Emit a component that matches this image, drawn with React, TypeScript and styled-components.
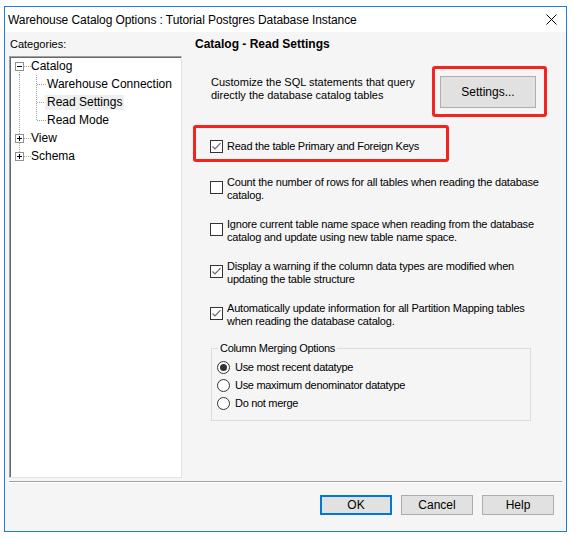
import React from 'react'
import styled, { createGlobalStyle } from 'styled-components'

const GlobalStyle = createGlobalStyle`
  html, body {
    margin: 0;
    padding: 0;
    background: #ffffff;
  }
  body {
    font-family: "Liberation Sans", Arial, sans-serif;
    color: #000;
  }
`

const Window = styled.div`
  box-sizing: border-box;
  width: 563px;
  height: 526px;
  margin: 6px 0 0 4px;
  border: 1px solid #1c7ed6;
  display: flex;
  flex-direction: column;
  background: #f5f5f5;
`

const TitleBar = styled.div`
  height: 25px;
  flex: none;
  display: flex;
  align-items: center;
  justify-content: space-between;
  padding: 0 9px 0 3px;
  background: #ffffff;
  font-size: 12px;
  letter-spacing: -0.08px;
`

const Body = styled.div`
  flex: 1;
  display: flex;
  flex-direction: column;
  min-height: 0;
`

const Main = styled.div`
  flex: 1;
  display: flex;
  padding: 0 4px;
  min-height: 0;
`

const LeftCol = styled.div`
  width: 173px;
  display: flex;
  flex-direction: column;
`

const CategoriesLabel = styled.div`
  height: 24px;
  box-sizing: border-box;
  padding: 6px 0 0 1px;
  font-size: 11px;
  line-height: 13px;
`

const TreeBox = styled.div`
  flex: 1;
  background: #fff;
  border-style: solid;
  border-width: 1px;
  border-color: #a0a0a0 #e3e3e3 #e3e3e3 #a0a0a0;
  box-shadow: inset 1px 1px 0 #696969;
`

const TreeRow = styled.div`
  height: 18px;
  display: flex;
  align-items: center;
  font-size: 12px;
  white-space: nowrap;
`

const TreeLabel = styled.span<{ $selected?: boolean }>`
  line-height: 15px;
  padding: 0 2px;
  margin-left: -2px;
  background: ${(p) => (p.$selected ? '#efefef' : 'transparent')};
`

const RightCol = styled.div`
  flex: 1;
  padding-left: 11px;
  display: flex;
  flex-direction: column;
`

const Heading = styled.div`
  margin-top: 5px;
  padding-left: 2px;
  font-size: 12px;
  line-height: 14px;
  font-weight: bold;
`

const SettingsRow = styled.div`
  margin-top: 15px;
  display: flex;
  align-items: flex-start;
`

const Description = styled.div`
  width: 221px;
  margin-left: 18px;
  padding-top: 10px;
  font-size: 11px;
  line-height: 13px;
`

const Highlight = styled.div<{ $pad: string; $width?: number; $top?: number }>`
  box-sizing: border-box;
  border: 3px solid #f5231d;
  border-radius: 3px;
  padding: ${(p) => p.$pad};
  width: ${(p) => (p.$width ? `${p.$width}px` : 'auto')};
  margin-top: ${(p) => p.$top ?? 0}px;
`

const Button = styled.button<{ $w: number; $h: number; $default?: boolean }>`
  box-sizing: border-box;
  width: ${(p) => p.$w}px;
  height: ${(p) => p.$h}px;
  margin: 0;
  padding: 0;
  background: #e1e1e1;
  border: ${(p) => (p.$default ? '2px solid #0078d7' : '1px solid #adadad')};
  font-family: "Liberation Sans", Arial, sans-serif;
  font-size: 12px;
  color: #000;
`

const OptionList = styled.div`
  margin: 14px 0 0 17px;
  display: flex;
  flex-direction: column;
  gap: 16px;
`

const Option = styled.div`
  display: flex;
  align-items: center;
  gap: 4px;
`

const BoxSlot = styled.span`
  display: flex;
  flex: none;
  margin-top: -4px;
`

const OptionText = styled.div`
  font-size: 11px;
  line-height: 13px;
  letter-spacing: -0.2px;
  white-space: nowrap;
`

const InlineCheck = styled.div`
  display: flex;
  align-items: center;
  gap: 4px;
  font-size: 11px;
  line-height: 13px;
  letter-spacing: -0.25px;
`

const GroupBox = styled.div`
  margin: 20px 0 0 18px;
  width: 320px;
  height: 73px;
  box-sizing: border-box;
  border: 1px solid #dcdcdc;
  padding: 0 0 0 5px;
  display: flex;
  flex-direction: column;
  align-items: flex-start;
`

const Legend = styled.div`
  margin: -7px 0 0 1px;
  padding: 0 2px;
  background: #f5f5f5;
  font-size: 11px;
  line-height: 13px;
  letter-spacing: -0.3px;
  white-space: nowrap;
`

const RadioList = styled.div`
  display: flex;
  flex-direction: column;
  margin-top: 3px;
`

const RadioRow = styled.div`
  height: 18px;
  display: flex;
  align-items: center;
  gap: 5px;
  font-size: 11px;
  letter-spacing: -0.3px;
`

const Separator = styled.div`
  margin: 3px 4px 0 4px;
  border-top: 1px solid #a0a0a0;
  border-bottom: 1px solid #ffffff;
`

const Footer = styled.div`
  display: flex;
  justify-content: flex-end;
  gap: 9px;
  padding: 12px 12px 0 0;
  height: 36px;
`

const CloseIcon = () => (
  <svg width="11" height="11" viewBox="0 0 11 11">
    <path d="M0.5 0.5 L10.5 10.5 M10.5 0.5 L0.5 10.5" stroke="#000" strokeWidth="1" />
  </svg>
)

const Checkbox = ({ checked }: { checked?: boolean }) => (
  <svg width="13" height="13" viewBox="0 0 13 13">
    <rect x="0.5" y="0.5" width="12" height="12" fill="#fff" stroke="#333" />
    {checked && (
      <path d="M2.5 6.5 L5 9 L10.5 3.2" fill="none" stroke="#6a6a6a" strokeWidth="1.2" />
    )}
  </svg>
)

const Radio = ({ checked }: { checked?: boolean }) => (
  <svg width="13" height="13" viewBox="0 0 13 13">
    <circle cx="6.5" cy="6.5" r="6" fill="#fff" stroke="#333" />
    {checked && <circle cx="6.5" cy="6.5" r="3.5" fill="#333" />}
  </svg>
)

type GutterProps = {
  depth: 0 | 1
  expander?: 'plus' | 'minus'
  first?: boolean
  last?: boolean
}

const dots = { stroke: '#a0a0a0', strokeDasharray: '1 1', shapeRendering: 'crispEdges' as const }

const TreeGutter = ({ depth, expander, first, last }: GutterProps) => {
  if (depth === 0) {
    return (
      <svg width="21" height="18" viewBox="0 0 21 18">
        <line x1="9.5" y1={first ? 9 : 0} x2="9.5" y2={last ? 9 : 18} {...dots} />
        <line x1="14" y1="9.5" x2="21" y2="9.5" {...dots} />
        {expander && (
          <g shapeRendering="crispEdges">
            <rect x="5.5" y="5.5" width="8" height="8" fill="#fff" stroke="#919191" />
            <line x1="7" y1="9.5" x2="12" y2="9.5" stroke="#000" />
            {expander === 'plus' && <line x1="9.5" y1="7" x2="9.5" y2="12" stroke="#000" />}
          </g>
        )}
      </svg>
    )
  }
  return (
    <svg width="37" height="18" viewBox="0 0 37 18">
      <line x1="9.5" y1="0" x2="9.5" y2="18" {...dots} />
      <line x1="26.5" y1="0" x2="26.5" y2={last ? 9 : 18} {...dots} />
      <line x1="27" y1="9.5" x2="36" y2="9.5" {...dots} />
    </svg>
  )
}

const options = [
  { checked: false, lines: ['Count the number of rows for all tables when reading the database', 'catalog.'] },
  { checked: false, lines: ['Ignore current table name space when reading from the database', 'catalog and update using new table name space.'] },
  { checked: true, lines: ['Display a warning if the column data types are modified when', 'updating the table structure'] },
  { checked: true, lines: ['Automatically update information for all Partition Mapping tables', 'when reading the database catalog.'] },
]

const radios = [
  { checked: true, label: 'Use most recent datatype' },
  { checked: false, label: 'Use maximum denominator datatype' },
  { checked: false, label: 'Do not merge' },
]

export default function App() {
  return (
    <>
      <GlobalStyle />
      <Window>
        <TitleBar>
          <span>Warehouse Catalog Options : Tutorial Postgres Database Instance</span>
          <CloseIcon />
        </TitleBar>
        <Body>
          <Main>
            <LeftCol>
              <CategoriesLabel>Categories:</CategoriesLabel>
              <TreeBox>
                <TreeRow>
                  <TreeGutter depth={0} expander="minus" first />
                  <TreeLabel>Catalog</TreeLabel>
                </TreeRow>
                <TreeRow>
                  <TreeGutter depth={1} />
                  <TreeLabel>Warehouse Connection</TreeLabel>
                </TreeRow>
                <TreeRow>
                  <TreeGutter depth={1} />
                  <TreeLabel $selected>Read Settings</TreeLabel>
                </TreeRow>
                <TreeRow>
                  <TreeGutter depth={1} last />
                  <TreeLabel>Read Mode</TreeLabel>
                </TreeRow>
                <TreeRow>
                  <TreeGutter depth={0} expander="plus" />
                  <TreeLabel>View</TreeLabel>
                </TreeRow>
                <TreeRow>
                  <TreeGutter depth={0} expander="plus" last />
                  <TreeLabel>Schema</TreeLabel>
                </TreeRow>
              </TreeBox>
            </LeftCol>
            <RightCol>
              <Heading>Catalog - Read Settings</Heading>
              <SettingsRow>
                <Description>
                  Customize the SQL statements that query
                  <br />
                  directly the database catalog tables
                </Description>
                <Highlight $pad="7px 8px 6px 5px">
                  <Button $w={96} $h={32}>Settings...</Button>
                </Highlight>
              </SettingsRow>
              <Highlight $pad="12px 0 6px 14px" $width={256} $top={8}>
                <InlineCheck>
                  <Checkbox checked />
                  <span>Read the table Primary and Foreign Keys</span>
                </InlineCheck>
              </Highlight>
              <OptionList>
                {options.map((o) => (
                  <Option key={o.lines[0]}>
                    <BoxSlot>
                      <Checkbox checked={o.checked} />
                    </BoxSlot>
                    <OptionText>
                      {o.lines[0]}
                      <br />
                      {o.lines[1]}
                    </OptionText>
                  </Option>
                ))}
              </OptionList>
              <GroupBox>
                <Legend>Column Merging Options</Legend>
                <RadioList>
                  {radios.map((r) => (
                    <RadioRow key={r.label}>
                      <Radio checked={r.checked} />
                      <span>{r.label}</span>
                    </RadioRow>
                  ))}
                </RadioList>
              </GroupBox>
            </RightCol>
          </Main>
          <Separator />
          <Footer>
            <Button $w={72} $h={20} $default>OK</Button>
            <Button $w={72} $h={20}>Cancel</Button>
            <Button $w={72} $h={20}>Help</Button>
          </Footer>
        </Body>
      </Window>
    </>
  )
}
